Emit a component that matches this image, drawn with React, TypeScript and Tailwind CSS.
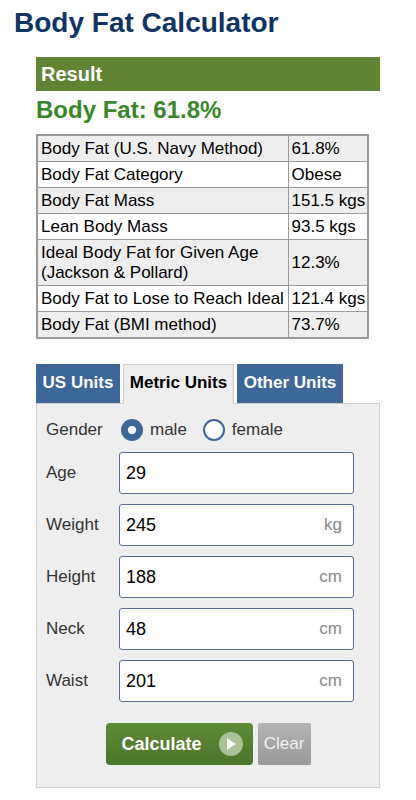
import React from 'react';

type Row = { label: React.ReactNode; value: string };

const rows: Row[] = [
  { label: 'Body Fat (U.S. Navy Method)', value: '61.8%' },
  { label: 'Body Fat Category', value: 'Obese' },
  { label: 'Body Fat Mass', value: '151.5 kgs' },
  { label: 'Lean Body Mass', value: '93.5 kgs' },
  {
    label: (
      <>
        Ideal Body Fat for Given Age
        <br />
        (Jackson &amp; Pollard)
      </>
    ),
    value: '12.3%',
  },
  { label: 'Body Fat to Lose to Reach Ideal', value: '121.4 kgs' },
  { label: 'Body Fat (BMI method)', value: '73.7%' },
];

const fields = [
  { label: 'Age', value: '29', unit: '' },
  { label: 'Weight', value: '245', unit: 'kg' },
  { label: 'Height', value: '188', unit: 'cm' },
  { label: 'Neck', value: '48', unit: 'cm' },
  { label: 'Waist', value: '201', unit: 'cm' },
];

function Radio({ checked, label }: { checked: boolean; label: string }) {
  return (
    <div className="flex items-center gap-[7px]">
      {checked ? (
        <span className="flex h-[22px] w-[22px] items-center justify-center rounded-full bg-[#3d6699]">
          <span className="h-[8px] w-[8px] rounded-full bg-white" />
        </span>
      ) : (
        <span className="h-[22px] w-[22px] rounded-full border-2 border-[#3d6699] bg-white" />
      )}
      <span className="text-[17px] text-[#333]">{label}</span>
    </div>
  );
}

export default function App() {
  return (
    <div className="min-h-[800px] w-[416px] bg-white font-['Liberation_Sans',Arial,sans-serif]">
      <h1 className="ml-[14px] pt-[7px] text-[28px] font-bold leading-[32px] text-[#0e3466]">Body Fat Calculator</h1>

      <div className="ml-[36px] w-[344px]">
        <div className="mt-[18px] h-[34px] bg-[#5f8434] pl-[5px] text-[20px] font-bold leading-[34px] text-white">Result</div>
        <p className="mt-[5px] text-[24px] font-bold leading-[28px] text-[#3a862b]">Body Fat: 61.8%</p>

        <table className="mt-[10px] w-[333px] table-fixed border-collapse border-2 border-[#9a9a9a] text-[17px] leading-[20px] text-black">
          <colgroup>
            <col className="w-[251px]" />
            <col />
          </colgroup>
          <tbody>
            {rows.map((row, i) => (
              <tr key={i} className={i % 2 === 0 ? 'bg-[#eeeeee]' : 'bg-white'}>
                <td className="border border-[#9a9a9a] px-[3px] py-[2.5px] align-middle whitespace-nowrap">{row.label}</td>
                <td className="border border-[#9a9a9a] px-[3px] py-[2.5px] align-middle whitespace-nowrap">{row.value}</td>
              </tr>
            ))}
          </tbody>
        </table>

        <div className="mt-[25px] flex items-end gap-[3px] text-[17px] font-bold">
          <div className="flex h-[39px] w-[84px] items-center justify-center bg-[#3d6699] pb-[2px] text-white">US Units</div>
          <div className="relative z-10 -mb-px flex h-[40px] w-[111px] items-center justify-center border border-b-0 border-[#cccccc] bg-[#eeeeee] pb-[3px] text-black">
            Metric Units
          </div>
          <div className="flex h-[39px] w-[106px] items-center justify-center bg-[#3d6699] pb-[2px] text-white">Other Units</div>
        </div>

        <div className="border border-[#cccccc] bg-[#eeeeee] pl-[9px] pt-[11px] pb-[22px]">
          <div className="flex h-[30px] items-center">
            <span className="w-[73px] text-[17px] text-[#333]">Gender</span>
            <div className="ml-[2px] flex items-center gap-[16px]">
              <Radio checked label="male" />
              <Radio checked={false} label="female" />
            </div>
          </div>

          <div className="mt-[7px] flex flex-col gap-[10px]">
            {fields.map((f) => (
              <div key={f.label} className="flex items-center">
                <span className="w-[73px] text-[17px] text-[#333]">{f.label}</span>
                <div className="flex h-[42px] w-[235px] items-center justify-between rounded-[3px] border-[1.5px] border-[#5b6f95] bg-white pl-[6px] pr-[11px]">
                  <span className="text-[18px] text-black">{f.value}</span>
                  <span className="text-[17px] text-[#888]">{f.unit}</span>
                </div>
              </div>
            ))}
          </div>

          <div className="mt-[21px] flex justify-center gap-[5px] pr-[9px]">
            <button
              type="button"
              className="flex h-[42px] w-[147px] items-center justify-between rounded-[4px] bg-gradient-to-b from-[#5e8c36] to-[#4b7528] pl-[16px] pr-[10px] text-[18px] font-bold text-white"
            >
              Calculate
              <span className="flex h-[24px] w-[24px] items-center justify-center rounded-full bg-[#a9c196]">
                <svg width="10" height="12" viewBox="0 0 10 12">
                  <path d="M1 0 L10 6 L1 12 Z" fill="#ffffff" />
                </svg>
              </span>
            </button>
            <button
              type="button"
              className="h-[42px] w-[53px] rounded-[2px] bg-gradient-to-b from-[#b4b4b4] to-[#989898] text-[17px] text-[#f2f2f2]"
            >
              Clear
            </button>
          </div>
        </div>
      </div>
    </div>
  );
}
